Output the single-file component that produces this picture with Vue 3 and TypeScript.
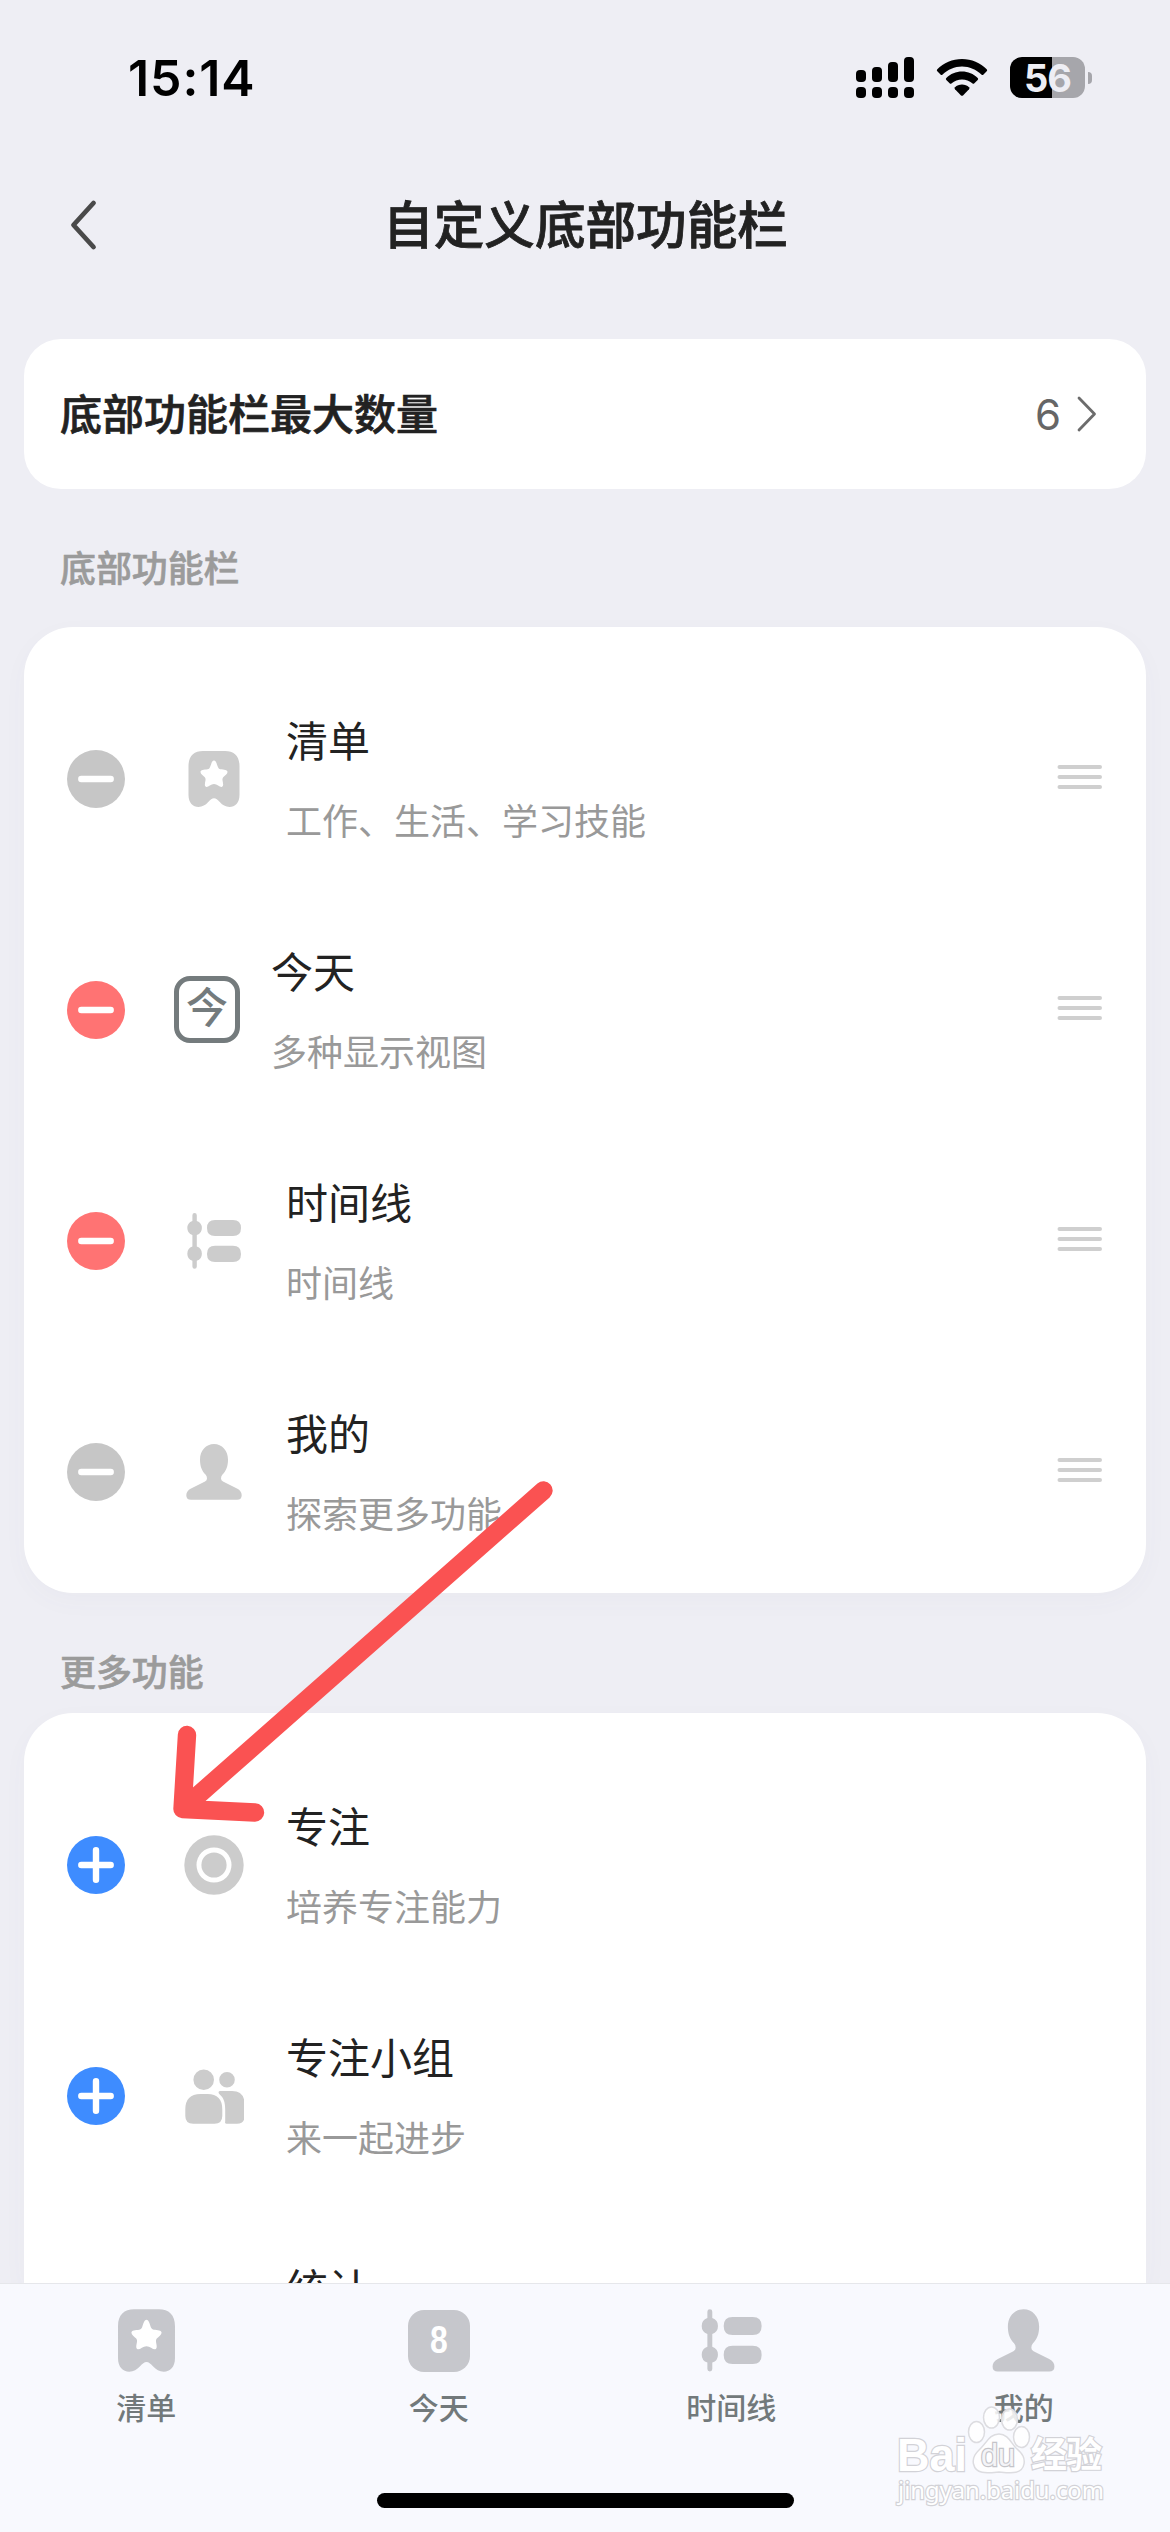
<script setup lang="ts">
type IconName = 'list' | 'today' | 'timeline' | 'person' | 'focus' | 'group' | 'none'

interface FeatureRow {
  title: string
  desc: string
  icon: IconName
  locked?: boolean
}

const active: FeatureRow[] = [
  { title: '清单', desc: '工作、生活、学习技能', icon: 'list', locked: true },
  { title: '今天', desc: '多种显示视图', icon: 'today' },
  { title: '时间线', desc: '时间线', icon: 'timeline' },
  { title: '我的', desc: '探索更多功能', icon: 'person', locked: true },
]

const more: FeatureRow[] = [
  { title: '专注', desc: '培养专注能力', icon: 'focus' },
  { title: '专注小组', desc: '来一起进步', icon: 'group' },
  { title: '统计', desc: '', icon: 'none' },
]

const tabs: { label: string; icon: IconName }[] = [
  { label: '清单', icon: 'list' },
  { label: '今天', icon: 'today' },
  { label: '时间线', icon: 'timeline' },
  { label: '我的', icon: 'person' },
]

// Glyph shapes share a 60x60 box
const shapes: Partial<Record<IconName, string>> = {
  list: 'M19 2H41C50 2 55.500 7 55.500 17V46C55.500 54 51 58 45.500 58C41.500 58 38.500 56 36 53.300C33.500 50.800 32 49.300 30 49.300C28 49.300 26.500 50.800 24 53.300C21.500 56 18.500 58 14.500 58C9 58 4.500 54 4.500 46V17C4.500 7 10 2 19 2Z M30 11.500C27.800 11.500 27.400 15 26 18.300Q25.300 20.100 23.500 20.300C20 20.700 16.500 20.800 16.500 23C16.500 25 19.200 26.500 20.800 28.300Q21.800 29.500 21.500 31.200C21 34 20 37.500 22.300 37.900C24.300 38.200 26.800 35.100 30 35.100C33.200 35.100 35.700 38.200 37.700 37.900C40 37.500 39 34 38.500 31.200Q38.200 29.500 39.200 28.300C40.800 26.500 43.500 25 43.500 23C43.500 20.800 40 20.700 36.500 20.300Q34.700 20.100 34 18.300C32.600 15 32.200 11.500 30 11.500Z',
  timeline: 'M10.600 2A2.200 2.200 0 0 1 12.800 4.200V9.900A7.500 7.500 0 0 1 12.800 24.100V35.600A7.500 7.500 0 0 1 12.800 49.800V55.500A2.200 2.200 0 0 1 8.400 55.500V49.800A7.500 7.500 0 0 1 8.400 35.600V24.100A7.500 7.500 0 0 1 8.400 9.900V4.200A2.200 2.200 0 0 1 10.600 2Z M31 8.900H49Q57 8.900 57 17Q57 25.100 49 25.100H31Q23 25.100 23 17Q23 8.900 31 8.900Z M31 34.800H49Q57 34.800 57 42.900Q57 51 49 51H31Q23 51 23 42.900Q23 34.800 31 34.800Z',
  person: 'M30 2C38 2 44 8.500 44 17.500C44 24.500 42 29 38.500 32.500Q37 34 37 36.500Q37 38.500 39 39.600L53 46.500Q57.700 49 57.700 53.200Q57.700 57.800 53 57.800H7Q2.300 57.800 2.300 53.200Q2.300 49 7 46.500L21 39.600Q23 38.500 23 36.500Q23 34 21.500 32.500C18 29 16 24.500 16 17.500C16 8.500 22 2 30 2Z',
  focus: 'M30 0.300A29.700 29.700 0 1 1 30 59.700A29.700 29.700 0 1 1 30 0.300Z M30 12.500A17.500 17.500 0 1 0 30 47.500A17.500 17.500 0 1 0 30 12.500Z M30 17.400A12.600 12.600 0 1 1 30 42.600A12.600 12.600 0 1 1 30 17.400Z',
  group: 'M19.700 3.400A10.300 10.300 0 1 1 19.700 24A10.300 10.300 0 1 1 19.700 3.400Z M43 6A7.800 7.800 0 1 1 43 21.600A7.800 7.800 0 1 1 43 6Z M16.500 28H23.500Q38.300 28 38.300 43.500V50Q38.300 57.700 30.500 57.700H9.200Q1.300 57.700 1.300 50V43.500Q1.300 28 16.500 28Z M36.500 25H48Q60.600 25 60.600 38.500V50Q60.600 57.700 53 57.700H42.500C40.800 57.700 41 56.800 41.200 55.200V43.500C41.200 36 39.500 32 36 28.800C34 27 34 25 36.500 25Z',
}
</script>

<template>
  <div class="page">
    <header class="status">
      <span class="clock">15:14</span>
      <div class="indicators">
        <svg class="signal" width="58" height="41" viewBox="0 0 58 41">
          <rect x="0" y="13" width="10" height="12" rx="4" />
          <rect x="16" y="10" width="10" height="15" rx="4" />
          <rect x="32" y="5" width="10" height="20" rx="4" />
          <rect x="48" y="0" width="10" height="25" rx="4" />
          <rect v-for="n in 4" :key="n" :x="(n - 1) * 16" y="30" width="10" height="11" rx="4" />
        </svg>
        <svg class="wifi" width="52" height="41" viewBox="0 0 52 41">
          <path d="M26 2C35.500 2 44.500 5.800 50.700 12.200Q51.700 13.300 50.700 14.300L47.500 17.500Q46.500 18.500 45.400 17.500C40.200 12.500 33.400 9.400 26 9.400C18.600 9.400 11.800 12.500 6.600 17.500Q5.500 18.500 4.500 17.500L1.300 14.300Q0.300 13.300 1.300 12.200C7.500 5.800 16.500 2 26 2Z" />
          <path d="M26 14.600C32 14.600 37.500 17 41.700 21Q42.700 22 41.700 23L38.400 26.300Q37.400 27.300 36.300 26.300C33.500 23.800 29.900 22.400 26 22.400C22.100 22.400 18.500 23.800 15.700 26.300Q14.600 27.300 13.600 26.300L10.300 23Q9.300 22 10.300 21C14.500 17 20 14.600 26 14.600Z" />
          <path d="M26 27.600C28.800 27.600 31.200 28.600 33 30.200Q34 31.200 33 32.300L27 38.400Q26 39.300 25 38.400L19 32.300Q18 31.200 19 30.200C20.800 28.600 23.200 27.600 26 27.600Z" />
        </svg>
        <div class="battery"><span>56</span></div>
        <i class="battery-cap"></i>
      </div>
    </header>

    <nav class="titlebar">
      <svg class="back" width="30" height="52" viewBox="0 0 30 52">
        <path d="M25.500 4L5.500 26L25.500 48" />
      </svg>
      <h1>自定义底部功能栏</h1>
    </nav>

    <section class="limit">
      <strong>底部功能栏最大数量</strong>
      <span class="limit-value">6</span>
      <svg width="20" height="38" viewBox="0 0 20 38">
        <path d="M2 3L17.500 19L2 35" />
      </svg>
    </section>

    <h2 class="label first">底部功能栏</h2>
    <section class="card">
      <div v-for="row in active" :key="row.title" class="row">
        <svg class="action" :class="{ locked: row.locked }" width="58" height="58" viewBox="0 0 58 58">
          <circle cx="29" cy="29" r="29" />
          <path d="M14.300 29H43.700" />
        </svg>
        <span v-if="row.icon === 'today'" class="today-box">今</span>
        <svg v-else class="glyph" width="60" height="60" viewBox="0 0 60 60">
          <path :d="shapes[row.icon]" fill-rule="evenodd" />
        </svg>
        <div class="texts">
          <div class="name">{{ row.title }}</div>
          <div class="desc">{{ row.desc }}</div>
        </div>
        <svg class="drag" width="46" height="26" viewBox="0 0 46 26">
          <path d="M2.500 3H43M2.500 13H43M2.500 23H43" />
        </svg>
      </div>
    </section>

    <h2 class="label second">更多功能</h2>
    <section class="card rest">
      <div v-for="row in more" :key="row.title" class="row">
        <svg class="action add" width="58" height="58" viewBox="0 0 58 58">
          <circle cx="29" cy="29" r="29" />
          <path d="M14.300 29H43.700M29 14.300V43.700" />
        </svg>
        <svg class="glyph" width="60" height="60" viewBox="0 0 60 60">
          <path v-if="row.icon !== 'none'" :d="shapes[row.icon]" fill-rule="evenodd" />
        </svg>
        <div class="texts">
          <div class="name">{{ row.title }}</div>
          <div class="desc">{{ row.desc }}</div>
        </div>
      </div>
    </section>

    <footer class="tabbar">
      <div class="tabs">
        <div v-for="tab in tabs" :key="tab.label" class="tab">
          <span v-if="tab.icon === 'today'" class="date"><b>8</b></span>
          <svg v-else width="67" height="67" viewBox="0 0 60 60">
            <path v-if="tab.icon === 'list'" d="M16 11H44V40H16Z" fill="#fff" />
            <path :d="shapes[tab.icon]" fill-rule="evenodd" />
          </svg>
          <span class="tab-label">{{ tab.label }}</span>
        </div>
      </div>
      <div class="home"></div>
    </footer>

    <svg class="arrow" width="390" height="350" viewBox="165 1475 390 350">
      <path d="M543.500 1490.500L182.500 1809M187 1735L182.500 1809L255 1812.500" />
    </svg>

    <svg class="watermark" width="220" height="110" viewBox="890 2402 220 110">
      <g class="wm-shape">
        <ellipse cx="976.500" cy="2432" rx="8" ry="10.500" />
        <ellipse cx="991.500" cy="2417.500" rx="8" ry="10.500" />
        <ellipse cx="1009.500" cy="2419.500" rx="8" ry="10.500" />
        <ellipse cx="1021.500" cy="2437" rx="8" ry="10.500" />
        <path d="M999 2434C1008 2434 1011 2443 1016 2448C1023 2454 1025 2458 1024 2464C1022 2475 1010 2473 999 2472C988 2473 976 2475 973.500 2464C972 2457 976 2453 981 2448C987 2442 990 2434 999 2434Z" />
      </g>
      <text class="wm-brand" x="897" y="2471" textLength="70" lengthAdjust="spacingAndGlyphs">Bai</text>
      <text class="wm-du" x="981" y="2466" textLength="34" lengthAdjust="spacingAndGlyphs">du</text>
      <text class="wm-cjk" x="1031" y="2468" textLength="71">经验</text>
      <text class="wm-url" x="898" y="2499" textLength="206" lengthAdjust="spacingAndGlyphs">jingyan.baidu.com</text>
    </svg>
  </div>
</template>

<style>
body {
  background: #eeeef4;
}
</style>

<style scoped>
.page {
  position: relative;
  display: flex;
  flex-direction: column;
  width: 1170px;
  height: 2532px;
  overflow: hidden;
  background: #eeeef4;
  color: #222;
  font-family: "Noto Sans CJK SC", sans-serif;
}

.page svg {
  display: block;
  flex: none;
}

.status {
  display: flex;
  justify-content: space-between;
  align-items: center;
  height: 155px;
  padding: 0 82px 0 128px;
  color: #000;
  font-family: Inter, sans-serif;
}

.clock {
  font-size: 50px;
  font-weight: 600;
  letter-spacing: 0.9px;
}

.indicators {
  display: flex;
  align-items: center;
}

.wifi {
  margin: 0 22px;
}

.battery {
  width: 75px;
  height: 41px;
  border-radius: 12px;
  background: linear-gradient(90deg, #000 42px, #a6a6ab 42px);
  color: #eeeef4;
  font-size: 38px;
  font-weight: 700;
  line-height: 42px;
  text-align: center;
  letter-spacing: -1px;
}

.battery-cap {
  width: 4px;
  height: 12px;
  margin-left: 3px;
  margin-right: -4px;
  border-radius: 0 6px 6px 0;
  background: #a6a6ab;
}

.titlebar {
  display: flex;
  align-items: center;
  height: 139px;
  margin-bottom: 45px;
  padding: 0 70px 0 68px;
}

.back path {
  fill: none;
  stroke: #4a4a4a;
  stroke-width: 4.8;
  stroke-linecap: round;
  stroke-linejoin: round;
}

h1 {
  flex: 1;
  margin: 0 27px 5px 0;
  font-size: 50.600px;
  font-weight: 500;
  text-align: center;
  -webkit-text-stroke: 0.8px #222;
}

.limit {
  display: flex;
  align-items: center;
  height: 150px;
  margin: 0 24px;
  padding: 0 49px 0 36px;
  border-radius: 37px;
  background: #fff;
  box-sizing: border-box;
}

.limit strong {
  flex: 1;
  padding-bottom: 5px;
  font-size: 42px;
  font-weight: 500;
  -webkit-text-stroke: 0.7px #222;
}

.limit-value {
  margin-right: 16px;
  color: #666;
  font-family: Inter, sans-serif;
  font-size: 42px;
}

.limit path {
  fill: none;
  stroke: #6c6c6c;
  stroke-width: 2.8;
  stroke-linecap: round;
  stroke-linejoin: round;
}

.label {
  margin: 0;
  padding-left: 60px;
  color: #9b9b9b;
  font-size: 35.900px;
  font-weight: 500;
  line-height: 54px;
  -webkit-text-stroke: 0.6px #9b9b9b;
}

.label.first {
  padding-top: 50px;
  padding-bottom: 34px;
}

.label.second {
  padding-top: 50px;
  padding-bottom: 16px;
}

.card {
  flex: none;
  height: 966px;
  margin: 0 24px;
  padding: 36px 43px 0;
  border-radius: 49px;
  background: #fff;
  box-shadow: 0 8px 26px rgba(80, 90, 130, 0.03);
  box-sizing: border-box;
}

.card.rest {
  flex: 1 1 0;
  height: auto;
  min-height: 0;
  overflow: hidden;
  border-radius: 49px 49px 0 0;
}

.row {
  display: flex;
  align-items: center;
  height: 231px;
}

.action circle {
  fill: #ff7373;
}

.action.locked circle {
  fill: #c6c6c6;
}

.action.add circle {
  fill: #3e8cff;
}

.action path {
  stroke: #fff;
  stroke-width: 6.4;
  stroke-linecap: round;
}

.glyph {
  margin: 0 42px 0 59px;
  fill: #ccc;
}

.today-box {
  width: 66px;
  height: 67px;
  margin: 0 31px 0 49px;
  border: 5.500px solid #747b7d;
  border-radius: 16px;
  box-sizing: border-box;
  color: #747b7d;
  font-size: 42px;
  font-weight: 500;
  line-height: 48px;
  text-indent: 6px;
  letter-spacing: 0;
  display: flex;
  justify-content: center;
  text-indent: 0;
}

.texts {
  flex: 1;
  padding-bottom: 5px;
}

.name {
  margin-bottom: 25px;
  font-size: 42px;
  line-height: 60px;
}

.desc {
  height: 50px;
  color: #999;
  font-size: 36px;
  line-height: 50px;
}

.drag {
  margin-top: -3px;
}

.drag path {
  stroke: #cfcfcf;
  stroke-width: 4;
  stroke-linecap: round;
}

.tabbar {
  position: relative;
  display: flex;
  flex: none;
  flex-direction: column;
  align-items: center;
  height: 249px;
  border-top: 1px solid #e6e7eb;
  background: #f8f9fe;
  box-sizing: border-box;
}

.tabs {
  display: flex;
  width: 100%;
  height: 209px;
}

.tab {
  display: flex;
  flex: 1;
  flex-direction: column;
  align-items: center;
  padding-top: 23px;
  fill: #c6c7cc;
}

.date {
  width: 62px;
  height: 62px;
  margin: 3px 0 2px;
  border-radius: 16px;
  background: #c6c7cc;
  color: #fff;
  font-family: "Liberation Sans", sans-serif;
  font-size: 38px;
  font-weight: 700;
  line-height: 60px;
  text-align: center;
}

.date b {
  display: block;
  transform: scaleX(0.84);
}

.tab-label {
  margin-top: 10px;
  color: #72797b;
  font-size: 30px;
  font-weight: 500;
  line-height: 44px;
}

.home {
  width: 417px;
  height: 15px;
  border-radius: 8px;
  background: #000;
}

.arrow {
  position: absolute;
  left: 165px;
  top: 1475px;
}

.arrow path {
  fill: none;
  stroke: #fa5252;
  stroke-width: 18.400;
  stroke-linecap: round;
  stroke-linejoin: round;
}

.watermark {
  position: absolute;
  left: 890px;
  top: 2402px;
}

.wm-shape {
  fill: rgba(255, 255, 255, 0.85);
  stroke: #dcdce0;
  stroke-width: 1.5;
}

.watermark text {
  fill: #fff;
  stroke: #d2d2d7;
  stroke-width: 2.4;
  paint-order: stroke;
  font-family: "Noto Sans CJK SC", sans-serif;
}

.watermark .wm-brand {
  font-family: "Liberation Sans", sans-serif;
  font-size: 47px;
  font-weight: 700;
}

.watermark .wm-du {
  fill: #f4f4f7;
  stroke: #c4c4c9;
  font-family: "Liberation Sans", sans-serif;
  font-size: 31px;
}

.watermark .wm-cjk {
  font-size: 36px;
  font-weight: 700;
}

.watermark .wm-url {
  font-family: "Noto Sans", sans-serif;
  font-size: 24px;
}
</style>
